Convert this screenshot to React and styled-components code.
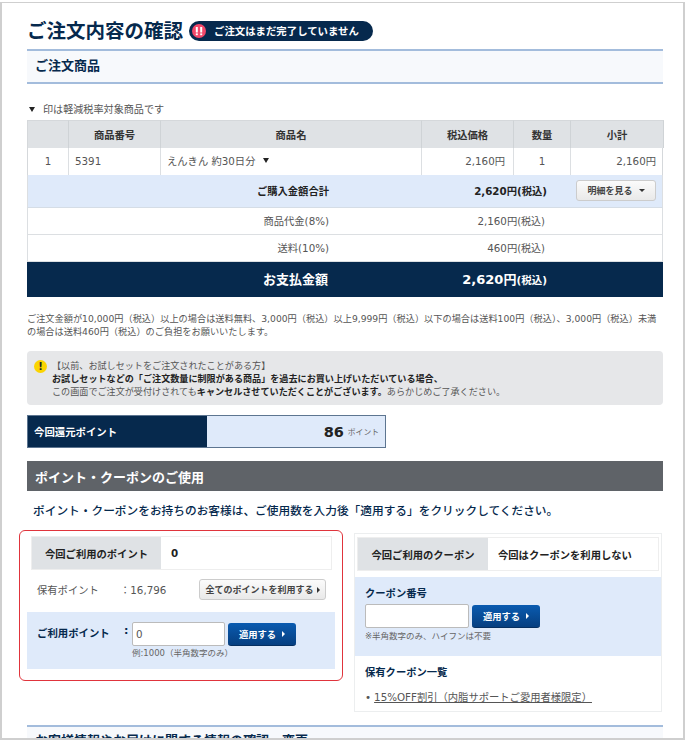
import React from "react";
import styled, { createGlobalStyle } from "styled-components";

const Global = createGlobalStyle`
  html, body { margin: 0; padding: 0; background: #fff; }
  body { font-family: "DejaVu Sans", "Noto Sans CJK JP", sans-serif; color: #444; font-size: 10.3px; width: 690px; height: 752px; overflow: hidden; }
  * { box-sizing: border-box; }
`;
const Navy = "#06294d";
const Frame = styled.div`
  width: 685px; height: 738px; margin: 2px 0 0 0; border: 2px solid #cfcfcf; border-top-width: 1px;
  padding: 0 20px 0 25px; overflow: hidden; background: #fff;
`;
const TitleRow = styled.div`display: flex; align-items: center; height: 46px; gap: 6px; padding-top: 9px;`;
const Title = styled.h1`margin: 0; padding-top: 2px; font-size: 19.5px; line-height: 26px; font-weight: 700; color: ${Navy}; white-space: nowrap;`;
const Pill = styled.div`
  width: 184px; height: 20px; border-radius: 10px; background: ${Navy}; color: #fff; font-size: 10.4px; font-weight: 700;
  display: flex; align-items: center; padding: 0 0 0 3px; gap: 8px; white-space: nowrap;
`;
const Section = styled.div`
  height: 35px; background: #f7f9fc; border-top: 2px solid #a3bcdc; border-bottom: 2px solid #a3bcdc;
  padding: 0 8px 2px; display: flex; align-items: center; font-size: 13px; line-height: 15px; font-weight: 700; color: ${Navy}; white-space: nowrap;
`;
const Note = styled.div`margin-top: 17px; height: 19px; padding: 0 0 3px 2px; display: flex; align-items: center; gap: 8px; font-size: 10.1px; line-height: 15px; color: #555; white-space: nowrap;`;
const Tri = styled.span`
  display: inline-block; flex: none; width: 0; height: 0; border-left: 3px solid transparent; border-right: 3px solid transparent; border-top: 5px solid #222;
`;
const Grid = styled.div`display: grid; grid-template-columns: 41px 92px 261px 92px 57px 93px; border: 1px solid #d5d8db; border-width: 0 1px;`;
const Head = styled.div`
  height: 28px; background: #dfe2e5; border-right: 1px solid #cfd3d6; border-top: 1px solid #d5d8db; display: flex; align-items: center; justify-content: center;
  font-size: 10.3px; font-weight: 700; color: #333; &:last-child { border-right: 0; }
`;
const Cell = styled.div`
  height: 27px; border-right: 1px solid #dcdfe2; display: flex; align-items: center; font-size: 10.3px; color: #555; gap: 8px;
  justify-content: ${p => p.$a || "flex-start"}; padding: 0 ${p => p.$a === "flex-end" ? 8 : 6}px 2px 6px; white-space: nowrap; &:last-child { border-right: 0; }
`;
const Sum = styled.div`
  display: grid; grid-template-columns: 301px ${p => p.$v || 216}px 1fr; align-items: center; height: ${p => p.$h}px; padding-bottom: 1px;
  background: ${p => p.$bg || "#fff"}; color: ${p => p.$c || "#555"}; border-bottom: 1px solid ${p => p.$bd || "#dcdfe2"};
  border-right: ${p => p.$bg === Navy ? "0" : "1px solid #dcdfe2"}; border-left: ${p => p.$bg === Navy ? "0" : "1px solid #dcdfe2"};
  font-size: ${p => p.$fs || 10.3}px; font-weight: ${p => p.$w || 400};
`;
const SumL = styled.div`text-align: right; white-space: nowrap;`;
const SumV = styled.div`text-align: right; white-space: nowrap;`;
const Tax = styled.span`font-size: ${p => p.$fs || 10}px;`;
const Gray = styled.button`
  font: inherit; font-weight: 700; color: #444; border: 1px solid #ccc; border-radius: 3px; height: ${p => p.$h || 21}px; width: ${p => p.$w || 80}px;
  background: linear-gradient(#fbfbfb, #e9e9e9); padding: 0; font-size: 9px; display: inline-flex; align-items: center; justify-content: center; gap: ${p => p.$gap || 6}px; white-space: nowrap;
`;
const Caret = styled.span`
  width: 0; height: 0; border-left: 3px solid transparent; border-right: 3px solid transparent; border-top: 3px solid #333;
`;
const RightCaret = styled.span`
  width: 0; height: 0; border-top: 3px solid transparent; border-bottom: 3px solid transparent; border-left: 3px solid ${p => p.$c || "#333"};
`;
const BtnCell = styled.div`display: flex; justify-content: flex-end; padding-right: 6px;`;
const Fine = styled.p`margin: 15px 0 0; font-size: 9.2px; line-height: 13px; color: #555; white-space: nowrap;`;
const Alert = styled.div`
  margin-top: 13px; height: 54px; border-radius: 4px; background: #e6e7e9; display: flex; padding: 9px 0 0 7px; gap: 5px; font-size: 9.1px; line-height: 13px; color: #555; white-space: nowrap;
`;
const Warn = styled.div`
  width: 13px; height: 13px; border-radius: 50%; background: #fbd400; color: #222; font-size: 10px; font-weight: 700; display: flex; align-items: center; justify-content: center; flex: none;
`;
const AlertBody = styled.div`b { color: #222; }`;
const Points = styled.div`margin-top: 10px; width: 359px; height: 33px; display: flex; border: 1px solid #5d7590;`;
const PLabel = styled.div`width: 179px; background: ${Navy}; color: #fff; font-size: 10.4px; font-weight: 700; display: flex; align-items: center; padding-left: 6px;`;
const PVal = styled.div`flex: 1; background: #dfeafa; display: flex; align-items: center; justify-content: flex-end; padding-right: 6px; gap: 4px; color: #222;`;
const Big = styled.b`font-size: 14.5px;`;
const Small = styled.span`font-size: 7.8px; color: #666;`;
const DarkBar = styled.div`
  margin-top: 13px; height: 30px; background: #5f6368; color: #fff; font-size: 13px; font-weight: 700; display: flex; align-items: center; padding-left: 8px;
`;
const Lead = styled.div`margin-top: 11px; height: 18px; padding-left: 6px; font-size: 11.7px; line-height: 18px; color: ${Navy}; font-weight: 500; white-space: nowrap;`;
const Cols = styled.div`display: flex; margin-top: 10px; margin-left: -8px; gap: 11px; align-items: flex-start;`;
const PointBox = styled.div`width: 324px; height: 151px; border: 1px solid #e0343c; border-radius: 6px; padding: 5px 7px 0 7px;`;
const CouponBox = styled.div`width: 308px; height: 179px; margin-top: 3px; border: 1px solid #eceeef; display: flex; flex-direction: column;`;
const Tabs = styled.div`display: flex; height: 34px; border: 1px solid #eee; margin: ${p => p.$m || "0 3px 0 4px"}; align-items: stretch; font-size: 10.3px; font-weight: 700; color: #222;`;
const TabHead = styled.div`width: ${p => p.$w}px; background: #dfe2e5; display: flex; align-items: center; justify-content: center; white-space: nowrap;`;
const TabVal = styled.div`display: flex; align-items: center; padding-left: ${p => p.$p}px; white-space: nowrap;`;
const HaveRow = styled.div`display: flex; align-items: center; height: 42px; padding: 0 9px 3px 10px; font-size: 10.3px; color: #555; white-space: nowrap;`;
const HaveL = styled.span`width: 83px;`;
const HaveV = styled.span`flex: 1;`;
const UseBlock = styled.div`background: #dfeafa; height: 57px; padding: 10px 0 0 10px; display: flex; align-items: flex-start;`;
const UseL = styled.div`width: 87px; font-size: 10.4px; line-height: 23px; font-weight: 700; color: ${Navy}; white-space: nowrap;`;
const Colon = styled.span`width: 8px; font-size: 11px; font-weight: 700; color: ${Navy}; line-height: 18px; margin-left: 0;`;
const Field = styled.div`display: flex; flex-direction: column;`;
const InRow = styled.div`display: flex; gap: 3px; align-items: flex-end;`;
const Input = styled.input`
  width: ${p => p.$w}px; height: 24px; border: 1px solid #bbb; border-radius: 2px; background: #fff; font: inherit; font-size: 10.3px; color: #555; padding: 0 3px; outline: none;
`;
const Apply = styled.button`
  width: 68px; height: 23px; border: 0; border-radius: 3px; background: linear-gradient(#0a5bb0, #063f80); color: #fff; font: inherit; font-weight: 700; font-size: 9.3px;
  display: inline-flex; align-items: center; justify-content: center; gap: 6px; padding: 0; border-bottom: 1px solid #052f60;
`;
const Hint = styled.div`font-size: 8.5px; line-height: 12px; color: #666; white-space: nowrap; margin-top: 1px;`;
const CouponBlue = styled.div`background: #dfeafa; height: 79px; margin-top: 6px; padding: 9px 10px 0; ${Hint} { margin-top: 2px; }`;
const CLabel = styled.div`font-size: 10.3px; font-weight: 700; color: ${Navy}; line-height: 15px; margin-bottom: 3px; white-space: nowrap;`;
const CList = styled.div`padding: 9px 10px 0;`;
const CItem = styled.div`display: flex; gap: 3px; margin-top: 10px; font-size: 10.3px; line-height: 14px; color: #555; white-space: nowrap;
  a { color: inherit; text-decoration: underline; }`;
const Next = styled(Section)`margin-top: 13px; align-items: flex-start; padding-top: 6px;`;

export default function App() {
  return (
    <>
      <Global />
      <Frame>
        <TitleRow>
          <Title>ご注文内容の確認</Title>
          <Pill>
            <svg width="14" height="14" viewBox="0 0 14 14"><circle cx="7" cy="7" r="7" fill="#f2486a" /><rect x="3.8" y="3" width="2" height="5.5" fill="#fff" /><rect x="8.2" y="3" width="2" height="5.5" fill="#fff" /><rect x="3.8" y="9.4" width="2" height="1.8" fill="#fff" /><rect x="8.2" y="9.4" width="2" height="1.8" fill="#fff" /></svg>
            ご注文はまだ完了していません
          </Pill>
        </TitleRow>
        <Section>ご注文商品</Section>
        <Note><Tri />印は軽減税率対象商品です</Note>
        <Grid>
          <Head /><Head>商品番号</Head><Head>商品名</Head><Head>税込価格</Head><Head>数量</Head><Head>小計</Head>
          <Cell $a="center">1</Cell><Cell>5391</Cell><Cell>えんきん 約30日分<Tri /></Cell><Cell $a="flex-end">2,160円</Cell><Cell $a="center">1</Cell><Cell $a="flex-end">2,160円</Cell>
        </Grid>
        <Sum $h={33} $v={218} $bg="#dfeafa" $c="#222" $w={700} $bd="#d5dde6">
          <SumL>ご購入金額合計</SumL><SumV>2,620円(税込)</SumV>
          <BtnCell><Gray>明細を見る <Caret /></Gray></BtnCell>
        </Sum>
        <Sum $h={27}><SumL>商品代金(8%)</SumL><SumV>2,160円<Tax>(税込)</Tax></SumV></Sum>
        <Sum $h={27}><SumL>送料(10%)</SumL><SumV>460円<Tax>(税込)</Tax></SumV></Sum>
        <Sum $h={35} $v={219} $bg={Navy} $c="#fff" $w={700} $fs={13} $bd={Navy}><SumL>お支払金額</SumL><SumV>2,620円<Tax $fs={10.5}>(税込)</Tax></SumV></Sum>
        <Fine>ご注文金額が10,000円（税込）以上の場合は送料無料、3,000円（税込）以上9,999円（税込）以下の場合は送料100円（税込）、3,000円（税込）未満<br />の場合は送料460円（税込）のご負担をお願いいたします。</Fine>
        <Alert>
          <Warn>!</Warn>
          <AlertBody>
            【以前、お試しセットをご注文されたことがある方】<br />
            <b>お試しセットなどの「ご注文数量に制限がある商品」を過去にお買い上げいただいている場合、</b><br />
            この画面でご注文が受付けされても<b>キャンセルさせていただくことがございます。</b>あらかじめご了承ください。
          </AlertBody>
        </Alert>
        <Points>
          <PLabel>今回還元ポイント</PLabel>
          <PVal><Big>86</Big><Small>ポイント</Small></PVal>
        </Points>
        <DarkBar>ポイント・クーポンのご使用</DarkBar>
        <Lead>ポイント・クーポンをお持ちのお客様は、ご使用数を入力後「適用する」をクリックしてください。</Lead>
        <Cols>
          <PointBox>
            <Tabs>
              <TabHead $w={129}>今回ご利用のポイント</TabHead>
              <TabVal $p={10}>0</TabVal>
            </Tabs>
            <HaveRow>
              <HaveL>保有ポイント</HaveL><HaveV>：16,796</HaveV>
              <Gray $w={127} $h={21} $gap={3}>全てのポイントを利用する<RightCaret /></Gray>
            </HaveRow>
            <UseBlock>
              <UseL>ご利用ポイント</UseL>
              <Colon>:</Colon>
              <Field>
                <InRow><Input $w={93} defaultValue="0" /><Apply>適用する <RightCaret $c="#fff" /></Apply></InRow>
                <Hint>例:1000（半角数字のみ）</Hint>
              </Field>
            </UseBlock>
          </PointBox>
          <CouponBox>
            <Tabs $m="3px 2px 0 2px">
              <TabHead $w={130}>今回ご利用のクーポン</TabHead>
              <TabVal $p={10}>今回はクーポンを利用しない</TabVal>
            </Tabs>
            <CouponBlue>
              <CLabel>クーポン番号</CLabel>
              <InRow><Input $w={104} /><Apply>適用する <RightCaret $c="#fff" /></Apply></InRow>
              <Hint>※半角数字のみ、ハイフンは不要</Hint>
            </CouponBlue>
            <CList>
              <CLabel>保有クーポン一覧</CLabel>
              <CItem>• <a>15%OFF割引（内脂サポートご愛用者様限定）</a></CItem>
            </CList>
          </CouponBox>
        </Cols>
        <Next>お客様情報やお届けに関する情報の確認・変更</Next>
      </Frame>
    </>
  );
}
